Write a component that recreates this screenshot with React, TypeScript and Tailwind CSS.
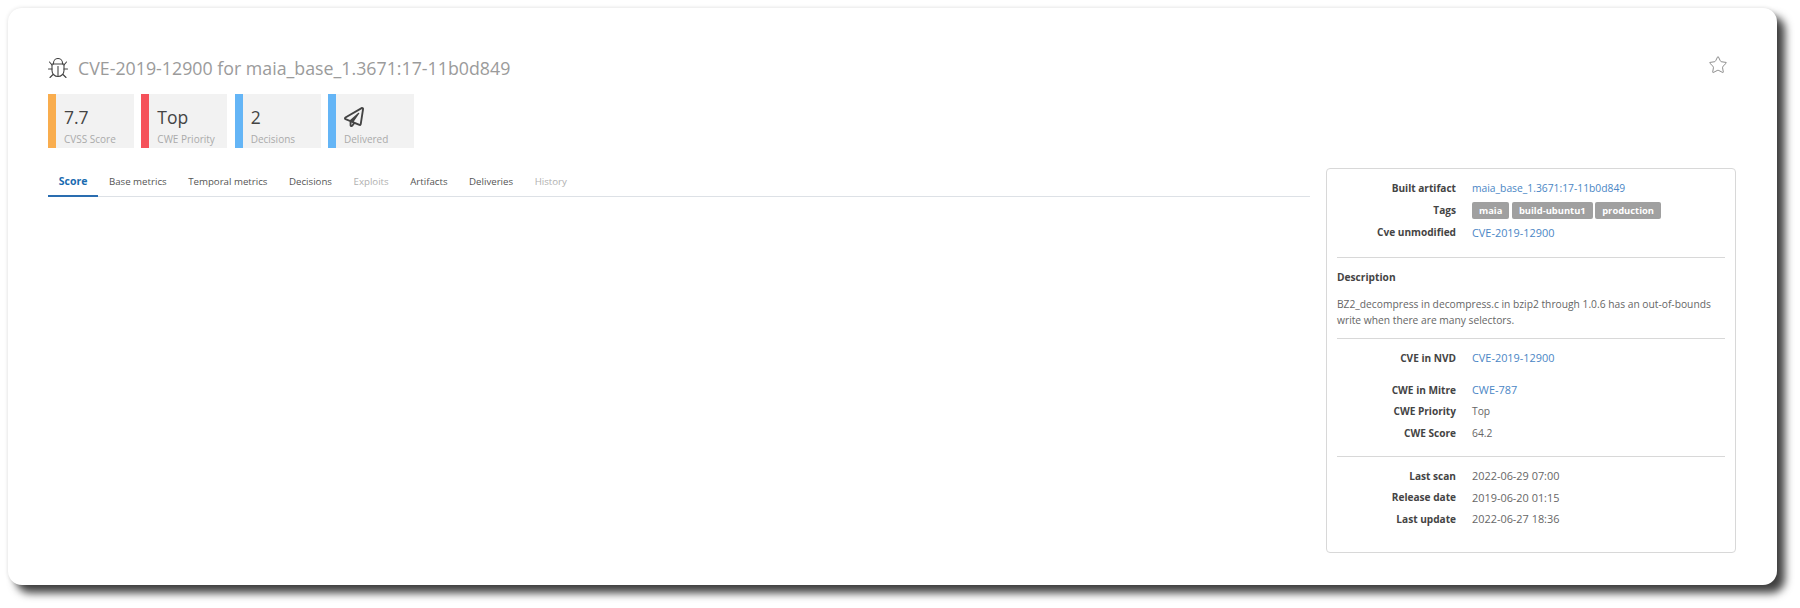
import { Star } from "lucide-react";
import { FaRegPaperPlane } from "react-icons/fa";

const font = "font-['Open_Sans','Noto_Sans',sans-serif]";

function BugIcon() {
  return (
    <svg width="20" height="20" viewBox="0 0 20 20" fill="none" stroke="#444" strokeWidth="1.1" strokeLinecap="round" strokeLinejoin="round">
      <path d="M5.5 6V5a4.5 4.5 0 0 1 9 0v1" />
      <path d="M4 6h12v6.5a6 6 0 0 1-12 0z" />
      <path d="M10 8.5v10" />
      <path d="M4 11H.5M16 11h3.5" />
      <path d="M4 7 1.5 4M16 7l2.5-3" />
      <path d="M5 16.5 2 19.5M15 16.5l3 3" />
    </svg>
  );
}

function Tile({ color, value, label, icon }: { color: string; value?: string; label: string; icon?: boolean }) {
  return (
    <div className={`flex h-[54px] w-[86px] bg-[#f2f2f2] border-l-[8px] ${color}`}>
      <div className="pl-[8px] pt-[9px]">
        <div className="h-[28px] flex items-center text-[17.5px] leading-[28px] text-[#444]">
          {icon ? <FaRegPaperPlane className="text-[20px] text-[#444]" /> : value}
        </div>
        <div className="text-[10px] leading-[14px] mt-[1px] text-[#aaa] whitespace-nowrap">{label}</div>
      </div>
    </div>
  );
}

function Row({ label, children, className = "h-[21.33px]" }: { label: string; children: React.ReactNode; className?: string }) {
  return (
    <div className={`flex items-center ${className}`}>
      <div className="w-[119px] text-right font-bold text-[10.1px] text-[#444] whitespace-nowrap">{label}</div>
      <div className="ml-[16px] text-[10.3px] text-[#666] whitespace-nowrap flex items-center">{children}</div>
    </div>
  );
}

function Link({ children, wide }: { children: React.ReactNode; wide?: boolean }) {
  return <span className={`text-[#4a86c5] ${wide ? "text-[10.9px]" : ""}`}>{children}</span>;
}

function Tag({ children }: { children: React.ReactNode }) {
  return <span className="h-[17px] px-[7px] rounded-[2px] bg-[#a0a0a0] text-white font-bold text-[9.4px] leading-[17px]">{children}</span>;
}

function Tab({ children, active, muted }: { children: React.ReactNode; active?: boolean; muted?: boolean }) {
  return (
    <div
      className={`h-[29px] -mb-px px-[10.75px] pt-[1px] flex items-center border-b-2 whitespace-nowrap ${
        active ? "border-[#2a6db0] text-[#1a6bb0] font-bold text-[10.5px]" : "border-transparent text-[9.7px]"
      } ${muted ? "text-[#b0b0b0]" : active ? "" : "text-[#555]"}`}
    >
      {children}
    </div>
  );
}

export default function App() {
  return (
    <div className={`w-[1800px] h-[608px] bg-white overflow-hidden pl-[8px] pt-[8px] ${font}`}>
      <div className="w-[1769px] h-[577px] rounded-[14px] bg-white shadow-[8px_8px_9px_rgba(0,0,0,0.75),0_0_4px_rgba(0,0,0,0.12)] pl-[40px] pr-[41px] pt-[48px] flex flex-col">
        <div className="flex items-center justify-between h-[24px]">
          <div className="flex items-center">
            <BugIcon />
            <div className="ml-[10px] text-[17.8px] leading-[24px] text-[#9b9b9b] whitespace-nowrap">
              CVE-2019-12900 for maia_base_1.3671:17-11b0d849
            </div>
          </div>
          <Star size={20} strokeWidth={1} className="text-[#777] mr-[8px] -mt-[6px]" />
        </div>

        <div className="flex gap-[7.33px] mt-[14px]">
          <Tile color="border-[#f9ad4e]" value="7.7" label="CVSS Score" />
          <Tile color="border-[#f5515a]" value="Top" label="CWE Priority" />
          <Tile color="border-[#64b5f6]" value="2" label="Decisions" />
          <Tile color="border-[#64b5f6]" label="Delivered" icon />
        </div>

        <div className="flex mt-[20px]">
          <div className="w-[1262px]">
            <div className="flex border-b border-[#dde1e6]">
              <Tab active>Score</Tab>
              <Tab>Base metrics</Tab>
              <Tab>Temporal metrics</Tab>
              <Tab>Decisions</Tab>
              <Tab muted>Exploits</Tab>
              <Tab>Artifacts</Tab>
              <Tab>Deliveries</Tab>
              <Tab muted>History</Tab>
            </div>
          </div>

          <div className="ml-[16px] w-[410px] h-[385px] border border-[#d8d8d8] rounded-[4px] px-[10px] pt-[9px]">
            <Row label="Built artifact"><Link>maia_base_1.3671:17-11b0d849</Link></Row>
            <Row label="Tags" className="h-[23px]">
              <div className="flex gap-[2.5px]">
                <Tag>maia</Tag>
                <Tag>build-ubuntu1</Tag>
                <Tag>production</Tag>
              </div>
            </Row>
            <Row label="Cve unmodified"><Link wide>CVE-2019-12900</Link></Row>
            <div className="mt-[13px] border-t border-[#d8d8d8]" />
            <div className="mt-[11px] h-[16px] leading-[16px] text-[10.2px] font-bold text-[#444]">Description</div>
            <div className="mt-[11px] leading-[16px] text-[10.25px] text-[#666] w-[385px]">
              BZ2_decompress in decompress.c in bzip2 through 1.0.6 has an out-of-bounds write when there are many selectors.
            </div>
            <div className="mt-[10px] border-t border-[#d8d8d8]" />
            <div className="mt-[9px]">
              <Row label="CVE in NVD"><Link wide>CVE-2019-12900</Link></Row>
            </div>
            <div className="mt-[11px]">
              <Row label="CWE in Mitre"><Link wide>CWE-787</Link></Row>
              <Row label="CWE Priority">Top</Row>
              <Row label="CWE Score">64.2</Row>
            </div>
            <div className="mt-[12px] border-t border-[#d8d8d8]" />
            <div className="mt-[9px] [&_span]:text-[10.9px]">
              <Row label="Last scan"><span>2022-06-29 07:00</span></Row>
              <Row label="Release date"><span>2019-06-20 01:15</span></Row>
              <Row label="Last update"><span>2022-06-27 18:36</span></Row>
            </div>
          </div>
        </div>
      </div>
    </div>
  );
}
